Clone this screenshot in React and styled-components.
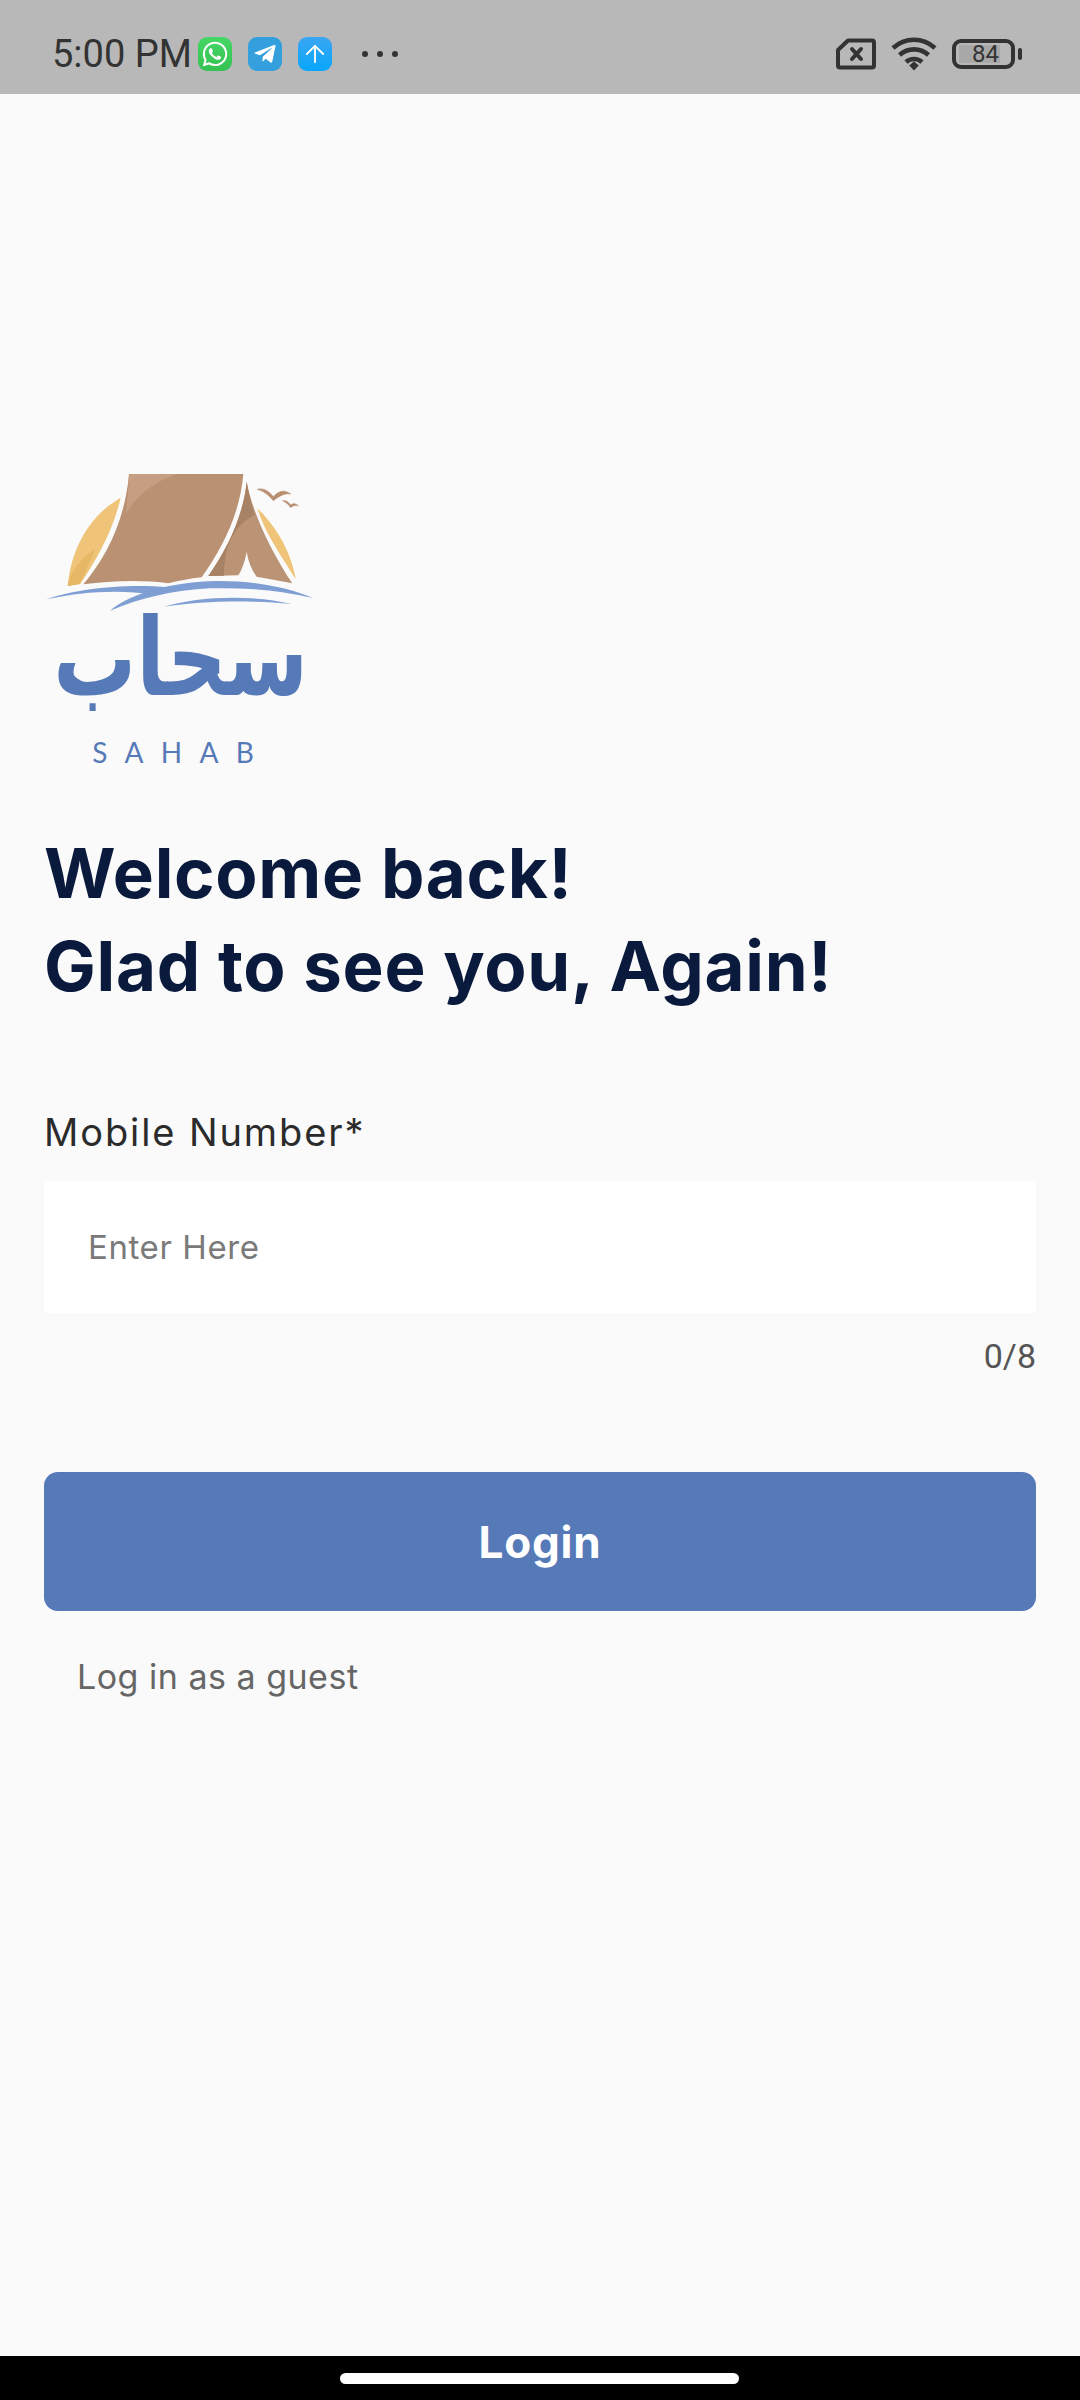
import React from 'react';
import styled, { createGlobalStyle } from 'styled-components';
import { FaWhatsapp, FaTelegramPlane } from 'react-icons/fa';
import { ArrowUp } from 'lucide-react';

const GlobalStyle = createGlobalStyle`
  html, body {
    margin: 0;
    padding: 0;
    background: #fafafa;
  }
  * {
    box-sizing: border-box;
  }
`;

const Page = styled.div`
  width: 1080px;
  height: 2400px;
  display: flex;
  flex-direction: column;
  background: #fafafa;
  font-family: Inter, 'Liberation Sans', sans-serif;
  overflow: hidden;
`;

const StatusBar = styled.div`
  height: 94px;
  flex: none;
  display: flex;
  align-items: center;
  justify-content: space-between;
  padding: 14px 65px 0 52px;
  background: #b8b8b8;
  color: #333;
`;

const StatusLeft = styled.div`
  display: flex;
  align-items: center;
`;

const Time = styled.span`
  width: 146px;
  font-family: Roboto, sans-serif;
  font-size: 38px;
  line-height: 40px;
  white-space: nowrap;
`;

const NotifIcon = styled.span`
  width: 34px;
  height: 34px;
  margin-right: 16px;
  display: flex;
  align-items: center;
  justify-content: center;
  border-radius: 9px;
  color: #fff;
  background: ${(p) => p.$bg};
`;

const Dots = styled.div`
  display: flex;
  gap: 9px;
  margin-left: 14px;
`;

const Dot = styled.i`
  width: 6px;
  height: 6px;
  border-radius: 50%;
  background: #333;
`;

const StatusRight = styled.div`
  display: flex;
  align-items: center;
  gap: 15px;
`;

const Battery = styled.div`
  position: relative;
  width: 63px;
  height: 30px;
  border: 4px solid #333;
  border-radius: 9px;
  padding: 2px 11px 2px 3px;
  &::after {
    content: '';
    position: absolute;
    right: -11px;
    top: 5px;
    width: 4px;
    height: 12px;
    border-radius: 2px;
    background: #333;
  }
`;

const BatteryLevel = styled.div`
  height: 18px;
  background: #a8a8a8;
  display: flex;
  align-items: center;
  justify-content: flex-end;
  padding-right: 1px;
  font-family: Roboto, sans-serif;
  font-size: 24px;
  color: #333;
`;

const Main = styled.main`
  flex: 1;
  padding: 376px 44px 0;
  display: flex;
  flex-direction: column;
`;

const LogoBox = styled.div`
  height: 300px;
  margin-bottom: 57px;
`;

const Heading = styled.h1`
  margin: 0;
  font-size: 69px;
  line-height: 93px;
  font-weight: 700;
  letter-spacing: 0.7px;
  color: #0a1a3d;
  white-space: nowrap;
`;

const FieldLabel = styled.label`
  display: block;
  margin-top: 91px;
  font-size: 38px;
  line-height: 56px;
  letter-spacing: 1.9px;
  color: #2b2b2b;
`;

const TextInput = styled.input`
  display: block;
  width: 100%;
  height: 132px;
  margin-top: 21px;
  padding: 0 44px;
  border: 0;
  outline: 0;
  background: #fff;
  font-family: inherit;
  font-size: 33px;
  letter-spacing: 0.6px;
  color: #222;
  &::placeholder {
    color: #7a7a7a;
    opacity: 1;
  }
`;

const Counter = styled.div`
  margin-top: 23px;
  text-align: right;
  font-family: Roboto, sans-serif;
  font-size: 34px;
  line-height: 40px;
  color: #555;
`;

const LoginButton = styled.button`
  display: block;
  width: 100%;
  height: 139px;
  margin-top: 96px;
  border: 0;
  border-radius: 14px;
  background: #5679b8;
  color: #fff;
  font-family: inherit;
  font-size: 44px;
  font-weight: 700;
  letter-spacing: 0.8px;
`;

const GuestLink = styled.a`
  display: block;
  margin-top: 43px;
  padding-left: 33px;
  font-size: 34px;
  line-height: 46px;
  letter-spacing: 0.5px;
  color: #666;
`;

const NavBar = styled.div`
  height: 44px;
  flex: none;
  background: #000;
  display: flex;
  justify-content: center;
  padding-top: 17px;
`;

const HomePill = styled.div`
  width: 399px;
  height: 11px;
  margin-left: -1px;
  border-radius: 6px;
  background: #fff;
`;

const SimIcon = () => (
  <svg width="40" height="32" viewBox="0 0 40 32" fill="none" stroke="#333" strokeWidth="4" strokeLinejoin="round">
    <path d="M12 2.5H36a2 2 0 0 1 2 2V27.5a2 2 0 0 1-2 2H4a2 2 0 0 1-2-2V12Z" />
    <path d="M16 11l9 10M25 11l-9 10" strokeLinecap="round" />
  </svg>
);

const WifiIcon = () => (
  <svg width="46" height="34" viewBox="0 0 46 34" fill="none" stroke="#333" strokeWidth="4.6">
    <path d="M2 11C14 0 32 0 44 11" />
    <path d="M8.5 18C17 10.5 29 10.5 37.5 18" />
    <path d="M15 25C19.5 21 26.5 21 31 25" />
    <path d="M18.2 28.6L23 24.6L27.8 28.6L23 33.4Z" fill="#333" stroke="none" />
  </svg>
);

const Logo = () => (
  <svg width="270" height="300" viewBox="42 60 810 900">
    {/* sun */}
    <path d="M272 143C190 190 125 280 113 408L150 402C200 330 250 240 272 143Z" fill="#efc478" />
    <path d="M113 408C120 370 150 325 195 298C180 335 165 370 150 402Z" fill="#e6b765" />
    <path d="M682 175C740 230 785 310 797 388C755 320 705 250 682 175Z" fill="#efc478" />
    {/* tent */}
    <path d="M297 72H640C630 190 580 290 515 382C480 386 450 392 415 400C340 388 240 392 160 403C230 320 285 210 297 72Z" fill="#ba9273" />
    <path d="M297 72H440C400 88 340 110 288 190C293 150 296 110 297 72Z" fill="#c69e82" />
    <path d="M650 95C665 180 720 300 787 400L680 380C665 360 655 335 650 305C645 335 635 360 625 376L535 378C590 300 640 200 650 95Z" fill="#bb9375" />
    <path d="M650 95C656 130 665 165 674 195C630 215 595 260 585 330C583 345 582 362 582 377L535 378C590 300 640 200 650 95Z" fill="#a88264" />
    {/* waves */}
    <path d="M50 448C140 415 290 400 415 412C400 420 385 426 365 433C270 418 150 425 50 448Z" fill="#7f9fd4" />
    <path d="M240 482C300 430 430 395 560 393C680 392 780 415 848 444C750 420 640 412 540 415C430 420 330 445 240 482Z" fill="#7f9fd4" />
    <path d="M402 470C500 440 660 432 785 462C660 450 520 452 402 470Z" fill="#7f9fd4" />
    {/* birds */}
    <path d="M682 118C700 113 715 122 730 140C745 125 760 116 782 132C765 128 750 137 730 152C715 135 700 122 682 118Z" fill="#b88e70" stroke="#b88e70" strokeWidth="2" />
    <path d="M757 152C768 150 776 156 782 165C788 160 795 158 806 168C796 165 790 168 781 173C775 162 767 156 757 152Z" fill="#b88e70" stroke="#b88e70" strokeWidth="1" />
    {/* name */}
    <text transform="translate(452 735) scale(1 1.3)" textAnchor="middle" fontFamily="'DejaVu Sans', sans-serif" fontWeight="700" fontSize="248" fill="#5679b8">سحاب</text>
    <text x="187" y="938" fontFamily="'Lato', sans-serif" fontSize="84" letterSpacing="52" fill="#5679b8">SAHAB</text>
  </svg>
);

export default function App() {
  return (
    <Page>
      <GlobalStyle />
      <StatusBar>
        <StatusLeft>
          <Time>5:00 PM</Time>
          <NotifIcon $bg="linear-gradient(#45d765, #35c152)"><FaWhatsapp size={28} /></NotifIcon>
          <NotifIcon $bg="#33a0dd"><FaTelegramPlane size={24} /></NotifIcon>
          <NotifIcon $bg="linear-gradient(#3aa6f2, #08a6fc)"><ArrowUp size={28} strokeWidth={1.6} /></NotifIcon>
          <Dots><Dot /><Dot /><Dot /></Dots>
        </StatusLeft>
        <StatusRight>
          <SimIcon />
          <WifiIcon />
          <Battery><BatteryLevel>84</BatteryLevel></Battery>
        </StatusRight>
      </StatusBar>
      <Main>
        <LogoBox><Logo /></LogoBox>
        <Heading>Welcome back!<br />Glad to see you, Again!</Heading>
        <FieldLabel>Mobile Number*</FieldLabel>
        <TextInput placeholder="Enter Here" />
        <Counter>0/8</Counter>
        <LoginButton>Login</LoginButton>
        <GuestLink>Log in as a guest</GuestLink>
      </Main>
      <NavBar><HomePill /></NavBar>
    </Page>
  );
}
